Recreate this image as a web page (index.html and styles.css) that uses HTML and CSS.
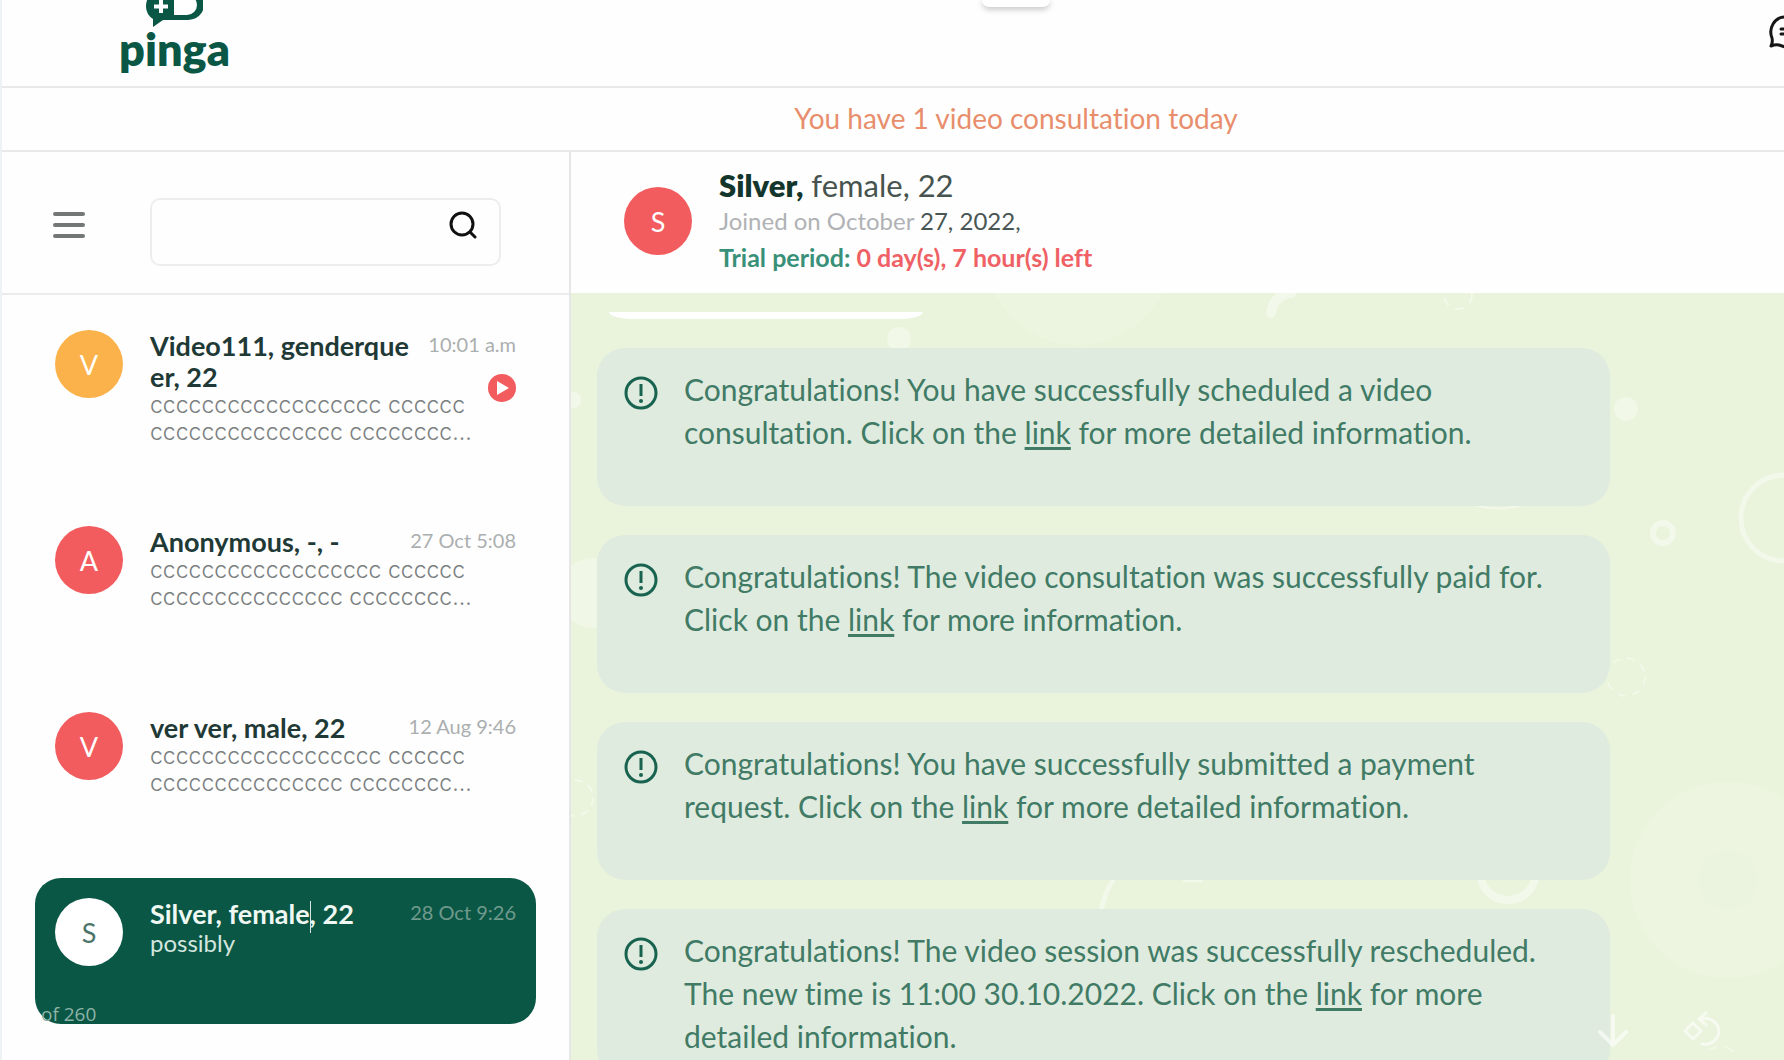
FILE: index.html
```html
<!DOCTYPE html>
<html lang="en">
<head>
<meta charset="utf-8">
<meta name="viewport" content="width=device-width, initial-scale=1">
<title>Pinga</title>
<link rel="stylesheet" href="styles.css">
</head>
<body>
<div class="app">
  <header class="topbar">
    <a class="logo" href="#">
      <svg class="logo-mark" viewBox="0 0 57 27" aria-hidden="true">
        <path d="M15-10H42a16 15 0 0 1 0 30H17L7 27V19A15 15 0 0 1 0 6 16 16 0 0 1 15-10Z" fill="#0b5745"/>
        <path d="M28-5H41a10 10 0 0 1 0 20H28Z" fill="#fff"/>
        <path d="M15 0v13M8 6.500h14" stroke="#fff" stroke-width="4"/>
      </svg>
      <span class="logo-word">pinga</span>
    </a>
    <button class="messages" type="button" aria-label="Messages">
      <svg viewBox="0 0 34 34" fill="none" stroke="#161616" stroke-width="3" stroke-linejoin="round" stroke-linecap="round" aria-hidden="true">
        <path d="M17 2A14 15 0 0 0 4 23Q5 27 3 31Q8 29 11 30L17 32A15 15 0 0 0 17 2Z"/>
        <path d="M13 14h12M13 19h12"/>
      </svg>
    </button>
    <div class="drop-tab"></div>
  </header>

  <p class="notice">You have 1 video consultation today</p>

  <main class="workspace">
    <aside class="sidebar">
      <div class="sidebar-head">
        <button class="menu" type="button" aria-label="Menu"><span></span><span></span><span></span></button>
        <form class="search">
          <input type="text" aria-label="Search">
          <button type="button" aria-label="Search">
            <svg viewBox="0 0 28 28" fill="none" stroke="#111" stroke-width="3" stroke-linecap="round" aria-hidden="true">
              <ellipse cx="13" cy="13" rx="11" ry="11"/><path d="M21 21l5 5"/>
            </svg>
          </button>
        </form>
      </div>

      <ul class="people">
        <li class="person">
          <span class="avatar amber">V</span>
          <h2>Video111, genderqueer, 22</h2>
          <div class="meta"><time>10:01 a.m</time>
            <svg class="play" viewBox="0 0 28 28" aria-hidden="true"><circle cx="14" cy="14" r="14" fill="#f25c5e"/><path d="M9 7l12 7-12 7Z" fill="#fff"/></svg>
          </div>
          <p>cccccccccccccccccc cccccc ccccccccccccccc cccccccc...</p>
        </li>
        <li class="person">
          <span class="avatar">A</span>
          <h2>Anonymous, -, -</h2>
          <div class="meta"><time>27 Oct 5:08</time></div>
          <p>cccccccccccccccccc cccccc ccccccccccccccc cccccccc...</p>
        </li>
        <li class="person">
          <span class="avatar">V</span>
          <h2>ver ver, male, 22</h2>
          <div class="meta"><time>12 Aug 9:46</time></div>
          <p>cccccccccccccccccc cccccc ccccccccccccccc cccccccc...</p>
        </li>
        <li class="person selected">
          <span class="avatar white">S</span>
          <h2>Silver, female<span class="caret"></span>, 22</h2>
          <div class="meta"><time>28 Oct 9:26</time></div>
          <p>possibly</p>
          <span class="counter">of 260</span>
        </li>
      </ul>
    </aside>

    <section class="conversation">
      <header class="patient">
        <span class="avatar">S</span>
        <div>
          <h1><b>Silver,</b> female, 22</h1>
          <p class="joined">Joined on October <span>27, 2022,</span></p>
          <p class="trial">Trial period: <span>0 day(s), 7 hour(s) left</span></p>
        </div>
      </header>

      <div class="chat">
        <svg class="pattern" viewBox="0 0 1213 767" fill="none" stroke="#fff" aria-hidden="true">
          <g fill="#fff" stroke="none">
            <circle cx="507" cy="-42" r="94" opacity=".12"/>
            <circle cx="328" cy="46" r="12" opacity=".35"/>
            <circle cx="2" cy="107" r="8" opacity=".4"/>
            <circle cx="22" cy="300" r="35" opacity=".3"/>
            <circle cx="1055" cy="116" r="12" opacity=".35"/>
            <circle cx="1157" cy="587" r="98" opacity=".14"/>
          </g>
          <circle cx="1157" cy="587" r="30" fill="#eaf4dc" stroke="none" opacity=".6"/>
          <g opacity=".4">
            <path d="M720 0Q703 2 700 20" stroke-width="10" stroke-linecap="round"/>
            <circle cx="887" cy="2" r="14" stroke-width="2" stroke-dasharray="9 7"/>
            <circle cx="1092" cy="240" r="10" stroke-width="6"/>
            <circle cx="1213" cy="225" r="43" stroke-width="5"/>
            <circle cx="1055" cy="384" r="19" stroke-width="2" stroke-dasharray="8 7"/>
            <circle cx="4" cy="505" r="18" stroke-width="2" stroke-dasharray="8 6"/>
            <path d="M900 211q28 9 55 0M612 588h20" stroke-width="2"/>
            <circle cx="937" cy="579" r="28" stroke-width="8"/>
            <path d="M530 618q3-17 13-33M566 445q10 2 14 10" stroke-width="5"/>
          </g>
        </svg>

        <div class="chat-feed">
          <div class="previous"></div>
          <article class="alert">
            <svg viewBox="0 0 34 34" aria-hidden="true"><use href="#bang"/></svg>
            <p>Congratulations! You have successfully scheduled a video consultation. Click on the <a href="#">link</a> for more detailed information.</p>
          </article>
          <article class="alert">
            <svg viewBox="0 0 34 34" aria-hidden="true"><use href="#bang"/></svg>
            <p>Congratulations! The video consultation was successfully paid for. Click on the <a href="#">link</a> for more information.</p>
          </article>
          <article class="alert">
            <svg viewBox="0 0 34 34" aria-hidden="true"><use href="#bang"/></svg>
            <p>Congratulations! You have successfully submitted a payment request. Click on the <a href="#">link</a> for more detailed information.</p>
          </article>
          <article class="alert">
            <svg viewBox="0 0 34 34" aria-hidden="true"><use href="#bang"/></svg>
            <p>Congratulations! The video session was successfully rescheduled. The new time is 11:00 30.10.2022. Click on the <a href="#">link</a> for more detailed information.</p>
          </article>
        </div>

        <div class="chat-tools">
          <svg viewBox="0 0 30 36" width="30" height="36" aria-hidden="true"><path d="M15 3v28M2 19l13 13 13-13"/></svg>
          <svg viewBox="0 0 54 42" width="54" height="42" aria-hidden="true"><path d="M3 21l8-8 8 8-8 8ZM24 3l-7 6 7 6M18 9A14 13 0 1 1 20 34" stroke-width="3"/><path d="M27 40l7-3M43 36l8 5" stroke-width="2" opacity=".6"/></svg>
        </div>
      </div>
    </section>
  </main>
</div>

<svg class="symbols" aria-hidden="true">
  <symbol id="bang" viewBox="0 0 34 34">
    <circle cx="17" cy="17" r="15" fill="none" stroke="#18634f" stroke-width="3"/>
    <path d="M17 8v12" stroke="#18634f" stroke-width="3"/>
    <circle cx="17" cy="25" r="2" fill="#18634f"/>
  </symbol>
</svg>
</body>
</html>
```
FILE: styles.css
```css
* { box-sizing: border-box; }

body {
  margin: 0;
  font-family: Lato, "Open Sans", sans-serif;
  font-variant-ligatures: none;
  color: #1f3a36;
  background: #fefefe;
}

h1, h2, p, ul { margin: 0; padding: 0; }

button {
  padding: 0;
  border: 0;
  background: none;
}

.symbols { display: none; }

.app {
  display: flex;
  flex-direction: column;
  height: 100vh;
  overflow: hidden;
  border-left: 2px solid #edf2f5;
}

/* Top bar */
.topbar {
  position: relative;
  display: flex;
  flex: none;
  justify-content: space-between;
  align-items: flex-start;
  height: 88px;
  padding-left: 117px;
  border-bottom: 2px solid #e8e9e9;
}

.logo {
  display: flex;
  flex-direction: column;
  align-items: center;
  color: #0b5745;
  text-decoration: none;
}

.logo-mark { width: 57px; height: 27px; }

.logo-word {
  margin-top: -4px;
  font-size: 45px;
  font-weight: 800;
  line-height: 52px;
}

.messages {
  width: 34px;
  height: 34px;
  margin: 15px -18px 0 0;
}

.messages svg { display: block; }

.drop-tab {
  position: absolute;
  top: 0;
  left: 55%;
  width: 68px;
  height: 7px;
  border-radius: 0 0 8px 8px;
  background: #fff;
  box-shadow: 0 2px 6px rgba(0, 0, 0, .25);
}

.notice {
  flex: none;
  height: 64px;
  padding-left: 246px;
  border-bottom: 2px solid #e8e9e9;
  color: #e88e6c;
  font-size: 28px;
  line-height: 60px;
  text-align: center;
}

.workspace {
  display: flex;
  flex: 1;
  min-height: 0;
}

/* Sidebar */
.sidebar {
  flex: none;
  width: 569px;
  border-right: 2px solid #e5e7e7;
}

.sidebar-head {
  display: flex;
  align-items: center;
  gap: 65px;
  height: 143px;
  padding: 18px 68px 0 51px;
  border-bottom: 2px solid #eaebeb;
}

.menu {
  display: flex;
  flex: none;
  flex-direction: column;
  gap: 7px;
  width: 32px;
  padding-bottom: 14px;
}

.menu span {
  height: 4px;
  border-radius: 2px;
  background: #737877;
}

.search {
  display: flex;
  flex: 1;
  align-items: center;
  min-width: 0;
  height: 68px;
  padding-right: 22px;
  border: 2px solid #eceeee;
  border-radius: 10px;
}

.search input {
  flex: 1;
  width: 100%;
  min-width: 0;
  height: 60px;
  padding: 0 16px;
  border: 0;
  outline: 0;
  background: none;
  font: 24px Lato, sans-serif;
}

.search button { padding-bottom: 14px; }
.search svg { display: block; width: 28px; height: 28px; }

.avatar {
  display: flex;
  flex: none;
  align-items: center;
  justify-content: center;
  width: 68px;
  height: 68px;
  border-radius: 50%;
  background: #f25c5e;
  color: #fff;
  font-size: 27px;
}

.avatar.amber { background: #fbb24b; }
.avatar.white { background: #fff; color: #4d7468; }

.people {
  display: flex;
  flex-direction: column;
  gap: 40px;
  padding: 15px 33px 0 33px;
  list-style: none;
}

.person {
  position: relative;
  display: grid;
  grid-template-columns: 68px 1fr 108px;
  grid-template-rows: auto 1fr;
  column-gap: 27px;
  min-height: 146px;
  padding: 20px;
}

.person .avatar { grid-area: 1 / 1 / 3 / 2; }

.person h2 {
  grid-area: 1 / 2;
  margin-right: -36px;
  font-size: 27px;
  font-weight: 700;
  line-height: 31px;
  word-break: break-all;
}

.meta {
  display: flex;
  flex-direction: column;
  grid-area: 1 / 3 / 3 / 4;
  align-items: flex-end;
  gap: 16px;
  color: #abafaf;
  font-size: 20px;
  line-height: 28px;
  white-space: nowrap;
}

.play { width: 28px; height: 28px; }

.person p {
  grid-area: 2 / 2 / 3 / 4;
  color: #7b8081;
  font-family: Inter, sans-serif;
  font-size: 23px;
  font-weight: 300;
  line-height: 27px;
}

.selected {
  border-radius: 26px;
  background: #0b5745;
}

.selected h2 { color: #f0f8f4; }

.selected p {
  color: #d3e6df;
  font-family: Lato, sans-serif;
  font-size: 24px;
  font-weight: 400;
}

.selected .meta { color: #6f9a8d; }

.caret {
  display: inline-block;
  width: 1px;
  height: 32px;
  margin: -4px -1px -4px 0;
  background: #d5e4df;
  vertical-align: middle;
}

.counter {
  position: absolute;
  bottom: -4px;
  left: 6px;
  color: #8fb3a8;
  font-family: "Open Sans", sans-serif;
  font-size: 19px;
  line-height: 27px;
}

/* Conversation */
.conversation {
  display: flex;
  flex: 1;
  flex-direction: column;
  min-width: 0;
}

.patient {
  display: flex;
  flex: none;
  align-items: center;
  gap: 27px;
  height: 141px;
  padding: 0 0 3px 53px;
}

.patient h1 {
  color: #46534f;
  font-size: 31px;
  font-weight: 400;
  line-height: 36px;
}

.patient b { color: #12352c; font-weight: 800; }

.patient p { font-size: 24px; line-height: 36px; }
.joined { color: #b0b2b5; }
.joined span { color: #485654; }
.patient .trial { color: #399078; font-size: 25px; font-weight: 700; }
.trial span { color: #ef6165; }

.chat {
  position: relative;
  flex: 1;
  min-height: 0;
  overflow: hidden;
  background: #eaf4dc;
}

.pattern {
  position: absolute;
  top: 0;
  right: 0;
  width: 1213px;
  height: 767px;
}

.chat-feed {
  position: relative;
  display: flex;
  flex-direction: column;
  gap: 29px;
  padding: 19px 174px 0 26px;
}

.previous {
  width: 314px;
  height: 7px;
  margin-left: 12px;
  border-radius: 0 0 24px 24px / 0 0 7px 7px;
  background: #fff;
}

.alert {
  display: flex;
  flex: none;
  align-items: flex-start;
  gap: 26px;
  min-height: 158px;
  padding: 20px 36px 20px 27px;
  border-radius: 28px;
  background: #e0ebdf;
}

.alert svg {
  flex: none;
  width: 34px;
  height: 34px;
  margin-top: 8px;
}

.alert p {
  color: #417b66;
  font-size: 30px;
  line-height: 43px;
}

.alert a {
  color: inherit;
  text-decoration-thickness: 3px;
  text-underline-offset: 3px;
}

.chat-tools {
  position: absolute;
  right: 48px;
  bottom: 8px;
  display: flex;
  align-items: center;
  gap: 54px;
  opacity: .6;
}

.chat-tools svg {
  fill: none;
  stroke: #fff;
  stroke-width: 4;
  stroke-linecap: round;
}
```
